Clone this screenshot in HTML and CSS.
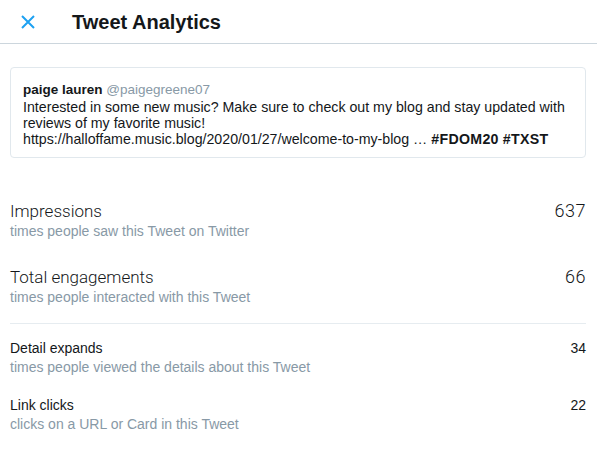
FILE: index.html
```html
<!DOCTYPE html>
<html lang="en">
<head>
<meta charset="utf-8">
<title>Tweet Analytics</title>
<link rel="stylesheet" href="styles.css">
</head>
<body>
<header class="topbar">
  <button class="close" aria-label="Close">
    <svg viewBox="0 0 14 14" width="14" height="14"><path d="M1 1 L13 13 M13 1 L1 13" stroke="#1da1f2" stroke-width="2" stroke-linecap="butt" fill="none"/></svg>
  </button>
  <h1 class="title">Tweet Analytics</h1>
</header>
<main class="content">
  <article class="tweet">
    <div class="tweet-head"><span class="name">paige lauren</span> <span class="handle">@paigegreene07</span></div>
    <p class="tweet-text">Interested in some new music? Make sure to check out my blog and stay updated with reviews of my favorite music! <span class="link">https://halloffame.music.blog/2020/01/27/welcome-to-my-blog …</span> <b class="tag">#FDOM20</b> <b class="tag">#TXST</b></p>
  </article>
  <section class="metrics major">
    <div class="metric">
      <div class="metric-text">
        <div class="label">Impressions</div>
        <div class="desc">times people saw this Tweet on Twitter</div>
      </div>
      <div class="value">637</div>
    </div>
    <div class="metric">
      <div class="metric-text">
        <div class="label">Total engagements</div>
        <div class="desc">times people interacted with this Tweet</div>
      </div>
      <div class="value">66</div>
    </div>
  </section>
  <section class="metrics minor">
    <div class="metric">
      <div class="metric-text">
        <div class="label">Detail expands</div>
        <div class="desc">times people viewed the details about this Tweet</div>
      </div>
      <div class="value">34</div>
    </div>
    <div class="metric">
      <div class="metric-text">
        <div class="label">Link clicks</div>
        <div class="desc">clicks on a URL or Card in this Tweet</div>
      </div>
      <div class="value">22</div>
    </div>
  </section>
</main>
</body>
</html>
```
FILE: styles.css
```css
html, body {
  margin: 0;
  padding: 0;
  background: #fff;
  font-family: "Liberation Sans", Arial, sans-serif;
  color: #14171a;
}

.topbar {
  display: flex;
  align-items: center;
  height: 43px;
  border-bottom: 1px solid #ccd6dd;
}

.close {
  display: flex;
  align-items: center;
  justify-content: center;
  width: 14px;
  height: 14px;
  margin: 0 0 0 21px;
  padding: 0;
  border: 0;
  background: none;
}

.title {
  margin: 0 0 0 37px;
  font-size: 20px;
  font-weight: 700;
  line-height: 24px;
  color: #14171a;
}

.content {
  padding: 23px 11px 0 10px;
}

.tweet {
  border: 1px solid #e1e8ed;
  border-radius: 4px;
  padding: 13px 12px 10px;
}

.tweet-head {
  font-size: 13.5px;
  line-height: 18px;
}

.tweet-head .name {
  font-weight: 700;
  color: #14171a;
}

.tweet-head .handle {
  color: #8899a6;
}

.tweet-text {
  margin: 0;
  font-size: 14.2px;
  line-height: 16px;
  color: #14171a;
}

.link {
  white-space: nowrap;
}

.tag {
  font-weight: 700;
  letter-spacing: 0.3px;
}

.metrics {
  display: flex;
  flex-direction: column;
}

.metric {
  display: flex;
  justify-content: space-between;
  align-items: flex-start;
}

.desc {
  color: #8899a6;
  font-size: 14px;
  line-height: 18px;
}

.major {
  padding: 43px 0 17px;
  gap: 27px;
  border-bottom: 1px solid #e6ecf0;
}

.major .label,
.major .value {
  font-family: Roboto, "Liberation Sans", sans-serif;
  font-weight: 300;
  font-size: 17px;
  line-height: 20px;
  color: #14171a;
}

.major .value {
  font-size: 18px;
  letter-spacing: 0.5px;
}

.major .desc {
  margin-top: 1px;
}

.minor {
  padding-top: 15px;
  gap: 20px;
}

.minor .label,
.minor .value {
  font-size: 14px;
  line-height: 19px;
  color: #14171a;
}
```
